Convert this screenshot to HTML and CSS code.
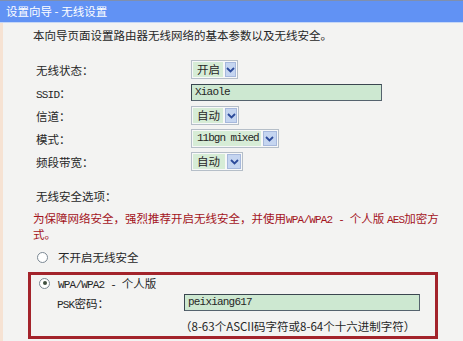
FILE: index.html
```html
<!DOCTYPE html>
<html lang="zh-CN">
<head>
<meta charset="utf-8">
<title>设置向导 - 无线设置</title>
<link rel="stylesheet" href="styles.css">
</head>
<body>
<div class="page">
  <div class="header">设置向导 - 无线设置</div>
  <div class="content">
    <p class="intro">本向导页面设置路由器无线网络的基本参数以及无线安全。</p>
    <div class="form">
      <span class="label">无线状态：</span>
      <span class="select w-on"><span class="val">开启</span><span class="arrow"><svg width="9" height="6" viewBox="0 0 9 6"><path d="M1 1 L4.5 4.5 L8 1" fill="none" stroke="#2c4a9a" stroke-width="1.8"/></svg></span></span>

      <span class="label"><span class="mono">SSID</span>：</span>
      <span class="input w-ssid"><span class="mono">Xiaole</span></span>

      <span class="label">信道：</span>
      <span class="select w-ch"><span class="val">自动</span><span class="arrow"><svg width="9" height="6" viewBox="0 0 9 6"><path d="M1 1 L4.5 4.5 L8 1" fill="none" stroke="#2c4a9a" stroke-width="1.8"/></svg></span></span>

      <span class="label">模式：</span>
      <span class="select w-mode"><span class="val mono">11bgn mixed</span><span class="arrow"><svg width="9" height="6" viewBox="0 0 9 6"><path d="M1 1 L4.5 4.5 L8 1" fill="none" stroke="#2c4a9a" stroke-width="1.8"/></svg></span></span>

      <span class="label">频段带宽：</span>
      <span class="select w-bw"><span class="val">自动</span><span class="arrow"><svg width="9" height="6" viewBox="0 0 9 6"><path d="M1 1 L4.5 4.5 L8 1" fill="none" stroke="#2c4a9a" stroke-width="1.8"/></svg></span></span>
    </div>

    <p class="sec-title">无线安全选项：</p>
    <p class="warn"><span>为保障网络安全，强烈推荐开启无线安全，并使用</span><span class="mono">WPA/WPA2 - </span><span>个人版 </span><span class="mono">AES</span><span>加密方</span><span>式。</span></p>

    <div class="radio-row off">
      <span class="radio"></span><span>不开启无线安全</span>
    </div>

    <div class="secbox">
      <div class="radio-row">
        <span class="radio checked"></span><span><span class="mono">WPA/WPA2 - </span>个人版</span>
      </div>
      <div class="psk-row">
        <span class="psk-label"><span class="mono">PSK</span>密码：</span>
        <span class="input w-psk"><span class="mono">peixiang617</span></span>
      </div>
      <div class="hint">（8-63个ASCII码字符或8-64个十六进制字符）</div>
    </div>
  </div>
</div>
</body>
</html>
```

FILE: styles.css
```css
html, body {
  margin: 0;
  padding: 0;
  background: #f3f3f2;
}

body {
  font-family: "Noto Sans CJK SC", "Noto Sans", sans-serif;
  font-size: 11.5px;
  color: #262626;
  width: 463px;
  height: 341px;
  overflow: hidden;
}

.page {
  border-left: 3px solid #f6e2d3;
  height: 341px;
  box-sizing: border-box;
}

.header {
  height: 21px;
  line-height: 21px;
  background: #6192f4;
  border-top: 1px solid #7f8fae;
  border-bottom: 1px solid #c6d7f6;
  color: #ffffff;
  font-size: 11.5px;
  margin-left: -3px;
  padding-left: 6px;
}

.content {
  padding-left: 30px;
}

.mono {
  font-family: "Liberation Mono", "DejaVu Sans Mono", monospace;
  font-size: 11px;
  letter-spacing: -0.8px;
  line-height: 1;
}

p {
  margin: 0;
}

.intro {
  line-height: 16px;
  margin-top: 4px;
}

.form {
  display: grid;
  grid-template-columns: 155px auto;
  grid-auto-rows: 23px;
  align-items: center;
  justify-items: start;
  margin-top: 15px;
  padding-left: 3px;
}

.label {
  line-height: 16px;
}

.select {
  display: inline-flex;
  align-items: stretch;
  box-sizing: border-box;
  height: 19px;
  border: 1px solid #b5bec8;
  padding: 1px;
  background: #f7f8f8;
  white-space: nowrap;
}

.select .val {
  flex: 1;
  background: #d6ecd6;
  line-height: 15px;
  padding: 0 3px 0 4px;
  display: flex;
  align-items: center;
}

.select .arrow {
  width: 14px;
  margin-left: 2px;
  background: #c5d5f0;
  border: 1px solid #a6b8dc;
  box-sizing: border-box;
  display: flex;
  align-items: center;
  justify-content: center;
}

.w-on { width: 47px; }
.w-ch { width: 48px; }
.w-bw { width: 52px; }
.w-mode .val { letter-spacing: -1px; padding-right: 2px; }

.input {
  display: inline-flex;
  align-items: center;
  box-sizing: border-box;
  height: 17px;
  background: #cde8d1;
  border: 1px solid #55636e;
  border-top-color: #3a4650;
  border-left-color: #3a4650;
  padding-left: 3px;
}

.w-ssid { width: 191px; }
.w-psk { width: 236px; }

.sec-title {
  margin-top: 15px;
  padding-left: 3px;
  line-height: 16px;
}

.warn {
  color: #a3141c;
  line-height: 16px;
  margin-top: 6px;
  width: 412px;
}

.radio-row {
  display: flex;
  align-items: center;
  line-height: 16px;
}

.radio-row.off {
  margin-top: 7px;
  padding-left: 4px;
}

.radio {
  width: 11px;
  height: 11px;
  box-sizing: border-box;
  border: 1px solid #7b8894;
  border-radius: 50%;
  background: #ffffff;
  margin-right: 10px;
  display: inline-flex;
  align-items: center;
  justify-content: center;
}

.secbox .radio {
  margin-right: 8px;
}

.radio.checked::after {
  content: "";
  width: 4px;
  height: 4px;
  border-radius: 50%;
  background: #3f4f3f;
}

.secbox {
  margin-top: 7px;
  margin-left: -5px;
  width: 410px;
  box-sizing: border-box;
  border: 3px solid #a3232b;
  padding: 0 0 2px 8px;
}

.secbox .radio-row {
  padding-top: 0;
}

.psk-row {
  display: flex;
  align-items: center;
  margin-top: 3px;
  padding-left: 18px;
}

.psk-label {
  width: 127px;
}

.hint {
  margin-top: 7px;
  padding-left: 141px;
  line-height: 16px;
}
```
